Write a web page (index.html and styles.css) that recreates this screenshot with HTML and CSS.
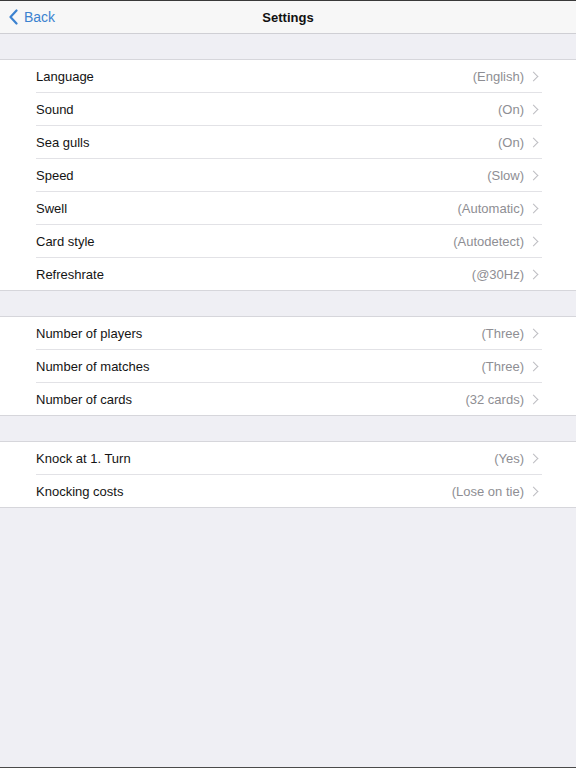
FILE: index.html
```html
<!DOCTYPE html>
<html>
<head>
<meta charset="utf-8">
<link rel="stylesheet" href="styles.css">
</head>
<body>
<div class="screen">
  <div class="topline"></div>
  <header class="nav">
    <div class="back">
      <svg class="back-icon" width="11" height="16" viewBox="0 0 11 16"><path d="M8.5 1.5 L2.5 8 L8.5 14.5" fill="none" stroke="#3b82d0" stroke-width="2.2" stroke-linecap="round" stroke-linejoin="round"/></svg>
      <span class="back-label">Back</span>
    </div>
    <div class="title">Settings</div>
  </header>
  <div class="spacer"></div>
  <section class="group">
    <div class="row"><div class="inner"><span class="label">Language</span><span class="value">(English)</span><span class="chev"></span></div></div>
    <div class="row"><div class="inner"><span class="label">Sound</span><span class="value">(On)</span><span class="chev"></span></div></div>
    <div class="row"><div class="inner"><span class="label">Sea gulls</span><span class="value">(On)</span><span class="chev"></span></div></div>
    <div class="row"><div class="inner"><span class="label">Speed</span><span class="value">(Slow)</span><span class="chev"></span></div></div>
    <div class="row"><div class="inner"><span class="label">Swell</span><span class="value">(Automatic)</span><span class="chev"></span></div></div>
    <div class="row"><div class="inner"><span class="label">Card style</span><span class="value">(Autodetect)</span><span class="chev"></span></div></div>
    <div class="row"><div class="inner"><span class="label">Refreshrate</span><span class="value">(@30Hz)</span><span class="chev"></span></div></div>
  </section>
  <div class="spacer"></div>
  <section class="group">
    <div class="row"><div class="inner"><span class="label">Number of players</span><span class="value">(Three)</span><span class="chev"></span></div></div>
    <div class="row"><div class="inner"><span class="label">Number of matches</span><span class="value">(Three)</span><span class="chev"></span></div></div>
    <div class="row"><div class="inner"><span class="label">Number of cards</span><span class="value">(32 cards)</span><span class="chev"></span></div></div>
  </section>
  <div class="spacer"></div>
  <section class="group">
    <div class="row"><div class="inner"><span class="label">Knock at 1. Turn</span><span class="value">(Yes)</span><span class="chev"></span></div></div>
    <div class="row"><div class="inner"><span class="label">Knocking costs</span><span class="value">(Lose on tie)</span><span class="chev"></span></div></div>
  </section>
  <div class="fill"></div>
  <div class="bottomline"></div>
</div>
</body>
</html>
```

FILE: styles.css
```css
html, body {
  margin: 0;
  padding: 0;
}
body {
  background: #efeff4;
  font-family: "Liberation Sans", Arial, sans-serif;
  font-size: 13px;
  color: #111111;
}
.screen {
  width: 576px;
  height: 768px;
  display: flex;
  flex-direction: column;
  background: #efeff4;
  overflow: hidden;
}
.topline {
  height: 1px;
  background: #3a3a3a;
  flex: none;
}
.bottomline {
  height: 1px;
  background: #4a4a4a;
  flex: none;
}
.nav {
  flex: none;
  height: 32px;
  background: #f7f7f7;
  border-bottom: 1px solid #cfcfd4;
  display: grid;
  grid-template-columns: 1fr auto 1fr;
  align-items: center;
}
.back {
  display: flex;
  align-items: center;
  padding-left: 8px;
  gap: 5px;
  color: #3b82d0;
  font-size: 14px;
}
.back-icon {
  display: block;
}
.title {
  font-weight: bold;
  font-size: 13px;
  color: #111;
}
.spacer {
  flex: none;
  height: 25px;
}
.group {
  flex: none;
  background: #ffffff;
  border-top: 1px solid #d6d6db;
  border-bottom: 1px solid #d6d6db;
}
.row {
  padding-left: 36px;
  padding-right: 34px;
}
.inner {
  height: 32px;
  display: flex;
  align-items: center;
  border-bottom: 1px solid #e2e2e6;
}
.row:last-child .inner {
  border-bottom: none;
}
.label {
  flex: 1;
  color: #141414;
}
.value {
  color: #8e8e93;
}
.chev {
  width: 6px;
  height: 6px;
  border-right: 1px solid #bdbdc2;
  border-top: 1px solid #bdbdc2;
  transform: rotate(45deg);
  margin-left: 6px;
  margin-right: 5px;
}
.fill {
  flex: 1;
}
```
